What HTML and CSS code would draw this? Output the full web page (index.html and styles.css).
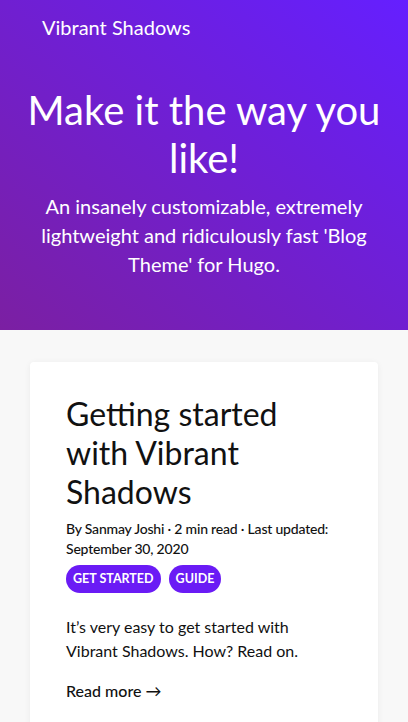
FILE: index.html
```html
<!DOCTYPE html>
<html lang="en">
<head>
<meta charset="utf-8">
<title>Vibrant Shadows</title>
<link rel="stylesheet" href="styles.css">
</head>
<body>
<header class="hero">
  <nav class="nav"><a class="brand" href="#">Vibrant Shadows</a></nav>
  <div class="hero-text">
    <h1>Make it the way you like!</h1>
    <p>An insanely customizable, extremely lightweight and ridiculously fast 'Blog Theme' for Hugo.</p>
  </div>
</header>
<main class="main">
  <article class="card">
    <h2 class="title">Getting started with Vibrant Shadows</h2>
    <div class="meta">By Sanmay Joshi · 2 min read · Last updated: September 30, 2020</div>
    <div class="tags"><a class="tag" href="#">GET STARTED</a><a class="tag" href="#">GUIDE</a></div>
    <p class="summary">It’s very easy to get started with Vibrant Shadows. How? Read on.</p>
    <a class="more" href="#">Read more →</a>
  </article>
</main>
</body>
</html>
```
FILE: styles.css
```css
* { box-sizing: border-box; }
html, body { margin: 0; padding: 0; }
body {
  font-family: Lato, "Noto Sans", sans-serif;
  background: #f8f8f8;
  color: #111;
}
a { text-decoration: none; color: inherit; }
.hero {
  height: 330px;
  background: linear-gradient(to top right, #7b1fa2 0%, #651fff 100%);
  color: #fff;
}
.nav { padding: 14px 42px 0; height: 58px; }
.brand { font-size: 20px; line-height: 26px; color: #fff; }
.hero-text { text-align: center; padding: 0 20px; }
.hero-text h1 {
  margin: 28px 0 0;
  font-weight: 400;
  font-size: 40px;
  line-height: 48px;
}
.hero-text p {
  margin: 10px 0 0;
  font-size: 20px;
  line-height: 29px;
  padding: 0 12px;
}
.main { padding: 32px 30px 0; }
.card {
  background: #fff;
  border-radius: 4px;
  box-shadow: 0 1px 6px rgba(0,0,0,0.06);
  padding: 32px 36px 30px;
  min-height: 400px;
}
.title {
  margin: 0;
  font-weight: 400;
  font-size: 32px;
  line-height: 39px;
  padding-right: 60px;
}
.meta {
  margin-top: 8px;
  font-size: 14px;
  font-weight: 500;
  line-height: 20px;
  letter-spacing: -0.2px;
}
.tags { display: flex; gap: 8px; margin-top: 6px; }
.tag {
  background: #6a1bf5;
  color: #fff;
  font-size: 12.5px;
  font-weight: 700;
  line-height: 28px;
  height: 28px;
  padding: 0 7px;
  border-radius: 14px;
}
.summary {
  margin: 22px 0 0;
  font-size: 16px;
  line-height: 24px;
  padding-right: 40px;
}
.more {
  display: inline-block;
  margin-top: 16px;
  font-size: 16px;
  font-weight: 500;
  line-height: 24px;
}
```
